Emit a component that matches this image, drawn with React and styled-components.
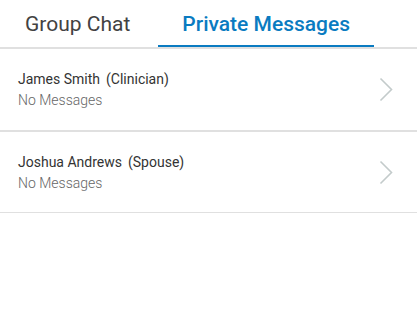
import React from "react";
import styled, { createGlobalStyle } from "styled-components";

const Global = createGlobalStyle`
  html, body { margin: 0; padding: 0; background: #fff; }
  body { font-family: Roboto, "Liberation Sans", sans-serif; }
`;

const Page = styled.div`
  width: 417px;
  height: 326px;
  background: #fff;
`;

const TabBar = styled.div`
  display: flex;
  gap: 4px;
  padding-left: 1px;
  height: 47px;
  border-bottom: 2px solid #e0e0e0;
`;

const Tab = styled.div`
  display: flex;
  align-items: center;
  justify-content: center;
  padding: 2px 24px 0;
  box-sizing: border-box;
  height: 47px;
  font-size: 21px;
  font-weight: ${(p) => (p.$active ? 500 : 400)};
  color: ${(p) => (p.$active ? "#0a7bc1" : "#424242")};
  border-bottom: 2px solid ${(p) => (p.$active ? "#0a7bc1" : "transparent")};
`;

const Row = styled.div`
  display: flex;
  align-items: center;
  justify-content: space-between;
  height: ${(p) => p.$h}px;
  padding: 0 24px 0 18px;
  border-bottom: ${(p) => p.$b}px solid #e0e0e0;
`;

const Info = styled.div`
  display: flex;
  flex-direction: column;
  gap: 5px;
`;

const Name = styled.div`
  font-size: 14px;
  color: #333;
  display: flex;
  gap: 6px;
`;

const Sub = styled.div`
  font-size: 14px;
  font-weight: 300;
  color: #666;
`;

const Chevron = () => (
  <svg width="14" height="25" viewBox="0 0 14 25">
    <polyline
      points="1.5,1.5 12.5,12.5 1.5,23.5"
      fill="none"
      stroke="#c3cbcb"
      strokeWidth="1.6"
    />
  </svg>
);

const items = [
  { name: "James Smith", role: "(Clinician)", h: 81, b: 2 },
  { name: "Joshua Andrews", role: "(Spouse)", h: 80, b: 1 },
];

export default function App() {
  return (
    <Page>
      <Global />
      <TabBar>
        <Tab>Group Chat</Tab>
        <Tab $active>Private Messages</Tab>
      </TabBar>
      {items.map((it) => (
        <Row key={it.name} $h={it.h} $b={it.b}>
          <Info>
            <Name>
              <span>{it.name}</span>
              <span>{it.role}</span>
            </Name>
            <Sub>No Messages</Sub>
          </Info>
          <Chevron />
        </Row>
      ))}
    </Page>
  );
}
